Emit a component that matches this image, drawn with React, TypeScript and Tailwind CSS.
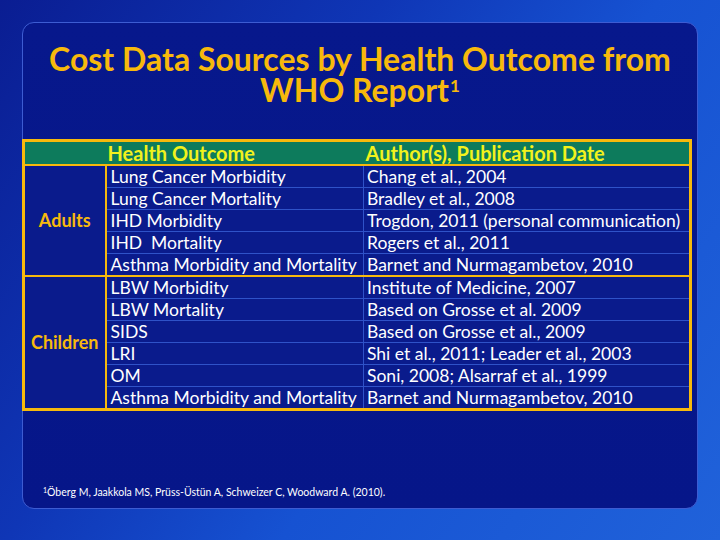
const adults = [
  ['Lung Cancer Morbidity', 'Chang et al., 2004'],
  ['Lung Cancer Mortality', 'Bradley et al., 2008'],
  ['IHD Morbidity', 'Trogdon, 2011 (personal communication)'],
  ['IHD\u00a0 Mortality', 'Rogers et al., 2011'],
  ['Asthma Morbidity and Mortality', 'Barnet and Nurmagambetov, 2010'],
];

const children = [
  ['LBW Morbidity', 'Institute of Medicine, 2007'],
  ['LBW Mortality', 'Based on Grosse et al. 2009'],
  ['SIDS', 'Based on Grosse et al., 2009'],
  ['LRI', 'Shi et al., 2011; Leader et al., 2003'],
  ['OM', 'Soni, 2008; Alsarraf et al., 1999'],
  ['Asthma Morbidity and Mortality', 'Barnet and Nurmagambetov, 2010'],
];

function Group({ label, rows, first }: { label: string; rows: string[][]; first?: boolean }) {
  return (
    <>
      {rows.map((row, i) => {
        const top = i === 0 && !first ? 'border-t-2 border-t-[#f7b90c]' : '';
        const line = i < rows.length - 1 ? 'border-b border-b-[#2f52c8]' : '';
        return (
          <tr key={row[0] + i} className="h-[22px]">
            {i === 0 && (
              <td
                rowSpan={rows.length}
                className={`border-r-2 border-r-[#f7b90c] text-center align-middle text-[18px] font-bold text-[#f7b90c] ${top}`}
              >
                {label}
              </td>
            )}
            <td className={`pl-[4px] text-[17.5px] leading-[21px] text-white whitespace-nowrap border-r border-r-[#2f52c8] ${top} ${line}`}>
              {row[0]}
            </td>
            <td className={`pl-[3px] text-[17.5px] leading-[21px] text-white whitespace-nowrap ${top} ${line}`}>{row[1]}</td>
          </tr>
        );
      })}
    </>
  );
}

export default function App() {
  return (
    <div
      className="w-[720px] h-[540px] overflow-hidden pt-[22px] pl-[22px] bg-[linear-gradient(125deg,#0a1d92_0%,#0f36b6_35%,#1652d2_60%,#2062da_100%)]"
      style={{ fontFamily: 'Lato, "Open Sans", sans-serif' }}
    >
      <div className="w-[676px] h-[487px] rounded-[12px] border border-[#3d5cd2] bg-[linear-gradient(180deg,#07188c_0%,#061689_100%)] flex flex-col">
        <h1 className="pt-[20px] text-center text-[32px] leading-[31px] font-bold text-[#f7b90c]">
          Cost Data Sources by Health Outcome from
          <br />
          WHO Report<span className="inline-block align-top text-[17px] leading-none pt-[3px] pl-[1px]">1</span>
        </h1>

        <table className="mt-[34px] -ml-px w-[670px] border-collapse border-[3px] border-[#f7b90c] bg-[#0a1b8c] table-fixed">
          <colgroup>
            <col className="w-[82px]" />
            <col className="w-[258px]" />
            <col />
          </colgroup>
          <thead>
            <tr className="h-[23px] bg-[#0d7b5c] border-b-2 border-b-[#f7b90c]">
              <th />
              <th className="pl-[2px] text-left text-[20px] leading-[22px] font-bold text-[#f2f21c] whitespace-nowrap">Health Outcome</th>
              <th className="pl-[2px] text-left text-[20px] leading-[22px] font-bold text-[#f2f21c] whitespace-nowrap">Author(s), Publication Date</th>
            </tr>
          </thead>
          <tbody>
            <Group label="Adults" rows={adults} first />
            <Group label="Children" rows={children} />
          </tbody>
        </table>

        <p className="mt-auto mb-[7px] pl-[20px] text-[10.5px] text-white">
          <sup className="text-[7px]">1</sup>Öberg M, Jaakkola MS, Prüss-Üstün A, Schweizer C, Woodward A. (2010).
        </p>
      </div>
    </div>
  );
}
